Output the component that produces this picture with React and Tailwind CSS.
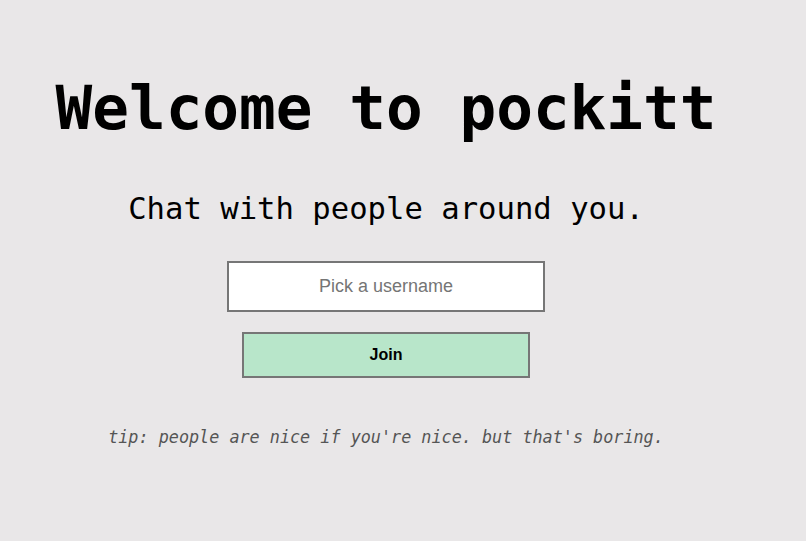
import { useState } from 'react';

const mono = { fontFamily: '"DejaVu Sans Mono", "Liberation Mono", monospace' };

const App = () => {
  const [username, setUsername] = useState('');

  return (
    <div className="min-h-[541px] w-full bg-[#e9e7e8]">
      <div className="flex flex-col items-center pr-[34px] pt-[77px]" style={mono}>
        {/* Title */}
        <h1 className="text-[61px] font-bold leading-none text-black whitespace-nowrap">
          Welcome to pockitt
        </h1>

        <p className="mt-[56px] text-[30.6px] leading-none text-black whitespace-nowrap">
          Chat with people around you.
        </p>

        {/* Form */}
        <input
          value={username}
          onChange={(e) => setUsername(e.target.value)}
          placeholder="Pick a username"
          className="mt-[36px] h-[51px] w-[318px] border-2 border-[#767676] bg-white text-center text-[18px] text-black placeholder:text-[#757575] outline-none"
          style={{ fontFamily: '"Liberation Sans", Arial, sans-serif' }}
        />

        <button
          className="mt-[20px] h-[46px] w-[288px] border-2 border-[#767676] bg-[#b8e6ca] text-[16px] font-bold text-black"
          style={{ fontFamily: '"Liberation Sans", Arial, sans-serif' }}
        >
          Join
        </button>

        <p className="mt-[51px] text-[16.8px] italic leading-none text-[#555555] whitespace-nowrap">
          tip: people are nice if you're nice. but that's boring.
        </p>
      </div>
    </div>
  );
};

export default App;
